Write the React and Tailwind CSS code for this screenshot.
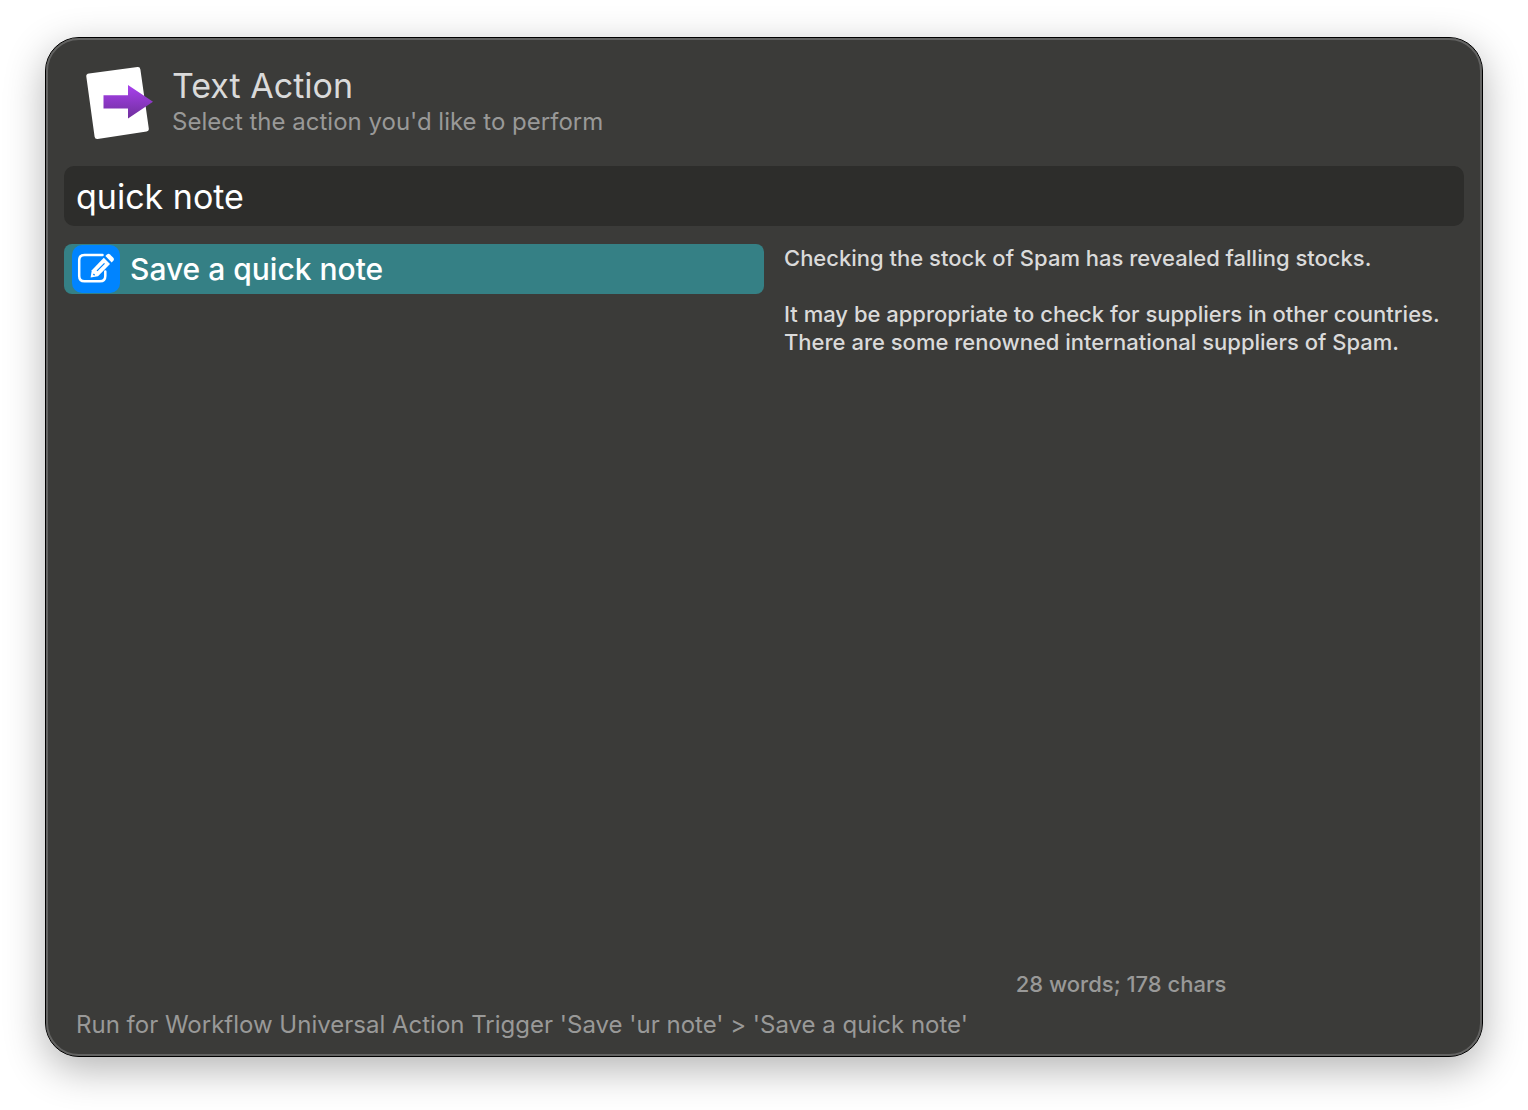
function TextActionIcon() {
  return (
    <svg viewBox="0 0 68 74" className="h-[74px] w-[68px] shrink-0" aria-hidden="true">
      <defs>
        <linearGradient id="arrow" x1="0" y1="0" x2="0" y2="1">
          <stop offset="0" stopColor="#a941ee" />
          <stop offset="1" stopColor="#6f2f9c" />
        </linearGradient>
      </defs>
      <path d="M3 7.6 51.5 1.1Q54 .8 54.4 3.4L62.8 62.6Q63.1 65.1 60.6 65.5L11.6 72.9Q9 73.2 8.6 70.7L.3 10.5Q0 8 3 7.6Z" fill="#fff" />
      <path d="M17.5 29.2H42V19L67 35.8 42 52.6V42.5H17.5Z" fill="url(#arrow)" />
    </svg>
  );
}

function QuickNoteIcon() {
  return (
    <svg viewBox="0 0 48 48" className="size-12 shrink-0" aria-hidden="true">
      <rect width="48" height="48" rx="10" fill="#0084ff" />
      <path
        d="M30.5 10H12.5Q7.2 10 7.2 15.3V31Q7.2 36.3 12.5 36.3H28Q33.3 36.3 33.3 31V26.5"
        fill="none"
        stroke="#fff"
        strokeWidth="2.5"
        strokeLinecap="round"
      />
      <path d="M31.8 12.8 38 19 26 31.2 18.6 32.6 19.8 25.2Z" fill="#fff" />
      <path d="M33.4 11.1 35 9.500Q36.500 8.100 38 9.500L41.300 12.800Q42.600 14.300 41.300 15.700L39.700 17.400Z" fill="#fff" />
      <path d="M25 25.900 32.500 18.400M21.400 29 22.600 30.200" stroke="#0084ff" strokeWidth="1.300" fill="none" />
    </svg>
  );
}

export default function App() {
  return (
    <div className="flex min-h-screen flex-col bg-white px-[45px] pt-[37px] pb-[53px] font-['Inter','Liberation_Sans',sans-serif]">
      <main className="flex grow flex-col rounded-[34px] border border-black bg-[#3b3b39] shadow-[0_12px_40px_rgba(0,0,0,0.3)]">
        <div className="flex grow flex-col rounded-[33px] border-2 border-[#636362] px-4 pt-[26px] pb-[13px]">
          <header className="flex items-center gap-[18px] pl-[22px]">
            <TextActionIcon />
            <div className="pb-0.5">
              <h1 className="text-[34px] leading-10 text-[#dadada]">Text Action</h1>
              <p className="text-[24px] leading-8 text-[#999998]">Select the action you'd like to perform</p>
            </div>
          </header>

          <input
            type="text"
            aria-label="Filter actions"
            defaultValue="quick note"
            className="mt-[26px] h-[60px] w-full rounded-[10px] bg-[#2d2d2b] px-3 text-[34px] text-white outline-none"
          />

          <div className="mt-[18px] grid grow grid-cols-2">
            <ul>
              <li>
                <button
                  type="button"
                  className="flex h-[50px] w-full items-center gap-2.5 rounded-lg bg-[#358085] px-2 text-left text-[30px] font-medium text-white"
                >
                  <QuickNoteIcon />
                  <span>Save a quick note</span>
                </button>
              </li>
            </ul>
            <section className="flex flex-col pr-1.5 pl-5 text-[22px] leading-7 font-medium">
              <div className="text-[#dadada]">
                <p>Checking the stock of Spam has revealed falling stocks.</p>
                <p className="mt-7">It may be appropriate to check for suppliers in other countries.</p>
                <p>There are some renowned international suppliers of Spam.</p>
              </div>
              <p className="mt-auto text-center text-[#999998]">28 words; 178 chars</p>
            </section>
          </div>

          <footer className="mt-[11px] px-3 text-[24px] leading-8 text-[#999998]">
            Run for Workflow Universal Action Trigger 'Save 'ur note' &gt; 'Save a quick note'
          </footer>
        </div>
      </main>
    </div>
  );
}
